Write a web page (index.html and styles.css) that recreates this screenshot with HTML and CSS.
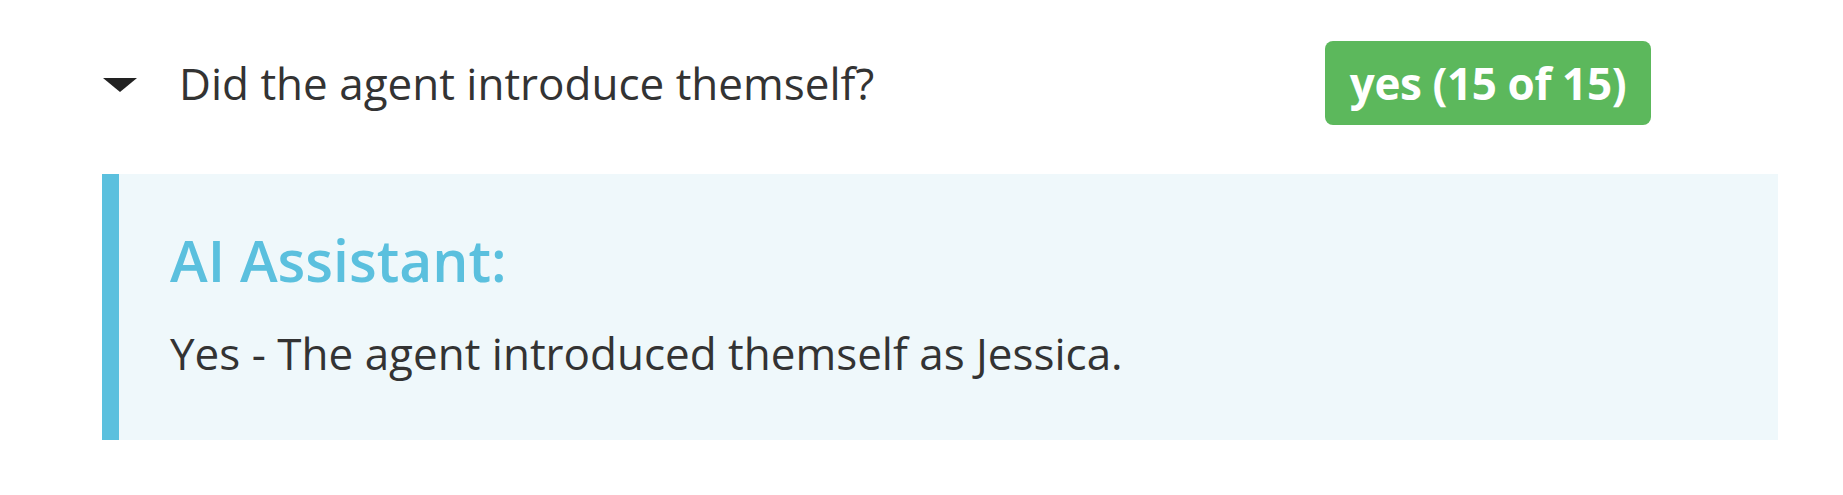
FILE: index.html
```html
<!DOCTYPE html>
<html lang="en">
<head>
    <meta charset="UTF-8">
    <title>Call review</title>
    <link rel="stylesheet" href="styles.css">
</head>
<body>

    <div class="question">
        <div class="question-head">
            <span class="caret"></span>
            <span class="question-text">Did the agent introduce themself?</span>
            <span class="badge">yes (15 of 15)</span>
        </div>
        <div class="callout">
            <h4>AI Assistant:</h4>
            <p>Yes - The agent introduced themself as Jessica.</p>
        </div>
    </div>

</body>
</html>
```

FILE: styles.css
```css
body {
    font-family: 'Open Sans', 'Noto Sans', sans-serif;
    background-color: #fff;
    color: #333;
    margin: 0;
}
.question {
    padding: 41px 65px 0 102px;
}
.question-head {
    display: flex;
    align-items: center;
    height: 84px;
    padding-right: 127px;
}
.caret {
    width: 0;
    height: 0;
    border-left: 17px solid transparent;
    border-right: 17px solid transparent;
    border-top: 14px solid #222;
    margin-left: 1px;
    margin-top: 4px;
}
.question-text {
    font-size: 44px;
    margin-left: 42px;
}
.badge {
    margin-left: auto;
    background-color: #5cb85c;
    color: #fff;
    font-weight: 700;
    font-size: 44px;
    letter-spacing: -0.4px;
    border-radius: 8px;
    height: 84px;
    width: 326px;
    display: flex;
    align-items: center;
    justify-content: center;
}
.callout {
    margin-top: 49px;
    background-color: #eff8fb;
    border-left: 17px solid #5bc0de;
    padding: 52px 51px 0;
    height: 266px;
    box-sizing: border-box;
}
.callout h4 {
    margin: 0 0 29px;
    color: #5bc0de;
    font-size: 57px;
    font-weight: 600;
    line-height: 1.2;
}
.callout p {
    margin: 0;
    font-size: 44px;
    line-height: 1.4;
}
```
